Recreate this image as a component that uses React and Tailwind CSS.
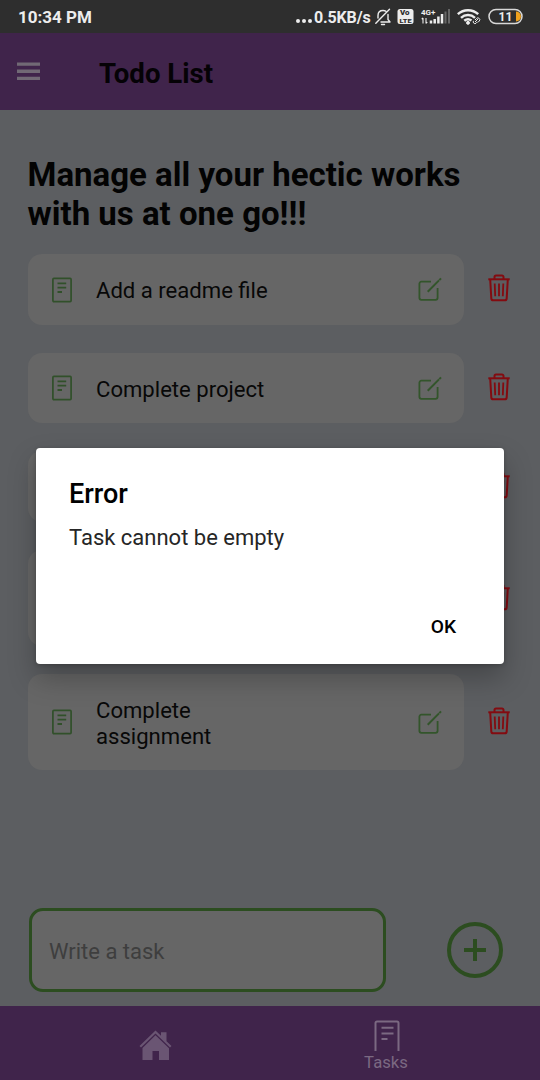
import React from "react";

function StatusBar() {
  return (
    <div className="flex h-[33px] shrink-0 items-center bg-[#2e2e2e] pl-[18px] pr-[17px] text-[#ededed]">
      <span className="mt-[2px] text-[17px] font-bold leading-none whitespace-nowrap">10:34 PM</span>
      <div className="ml-auto flex items-center">
        <svg width="18" height="16" viewBox="0 0 18 16" fill="#ededed">
          <circle cx="2" cy="12" r="2" />
          <circle cx="8" cy="12" r="2" />
          <circle cx="14" cy="12" r="2" />
        </svg>
        <span className="mt-[2px] w-[58px] text-[16px] font-bold leading-none tracking-[-0.150px] whitespace-nowrap">0.5KB/s</span>
        <svg className="ml-[2px]" width="18" height="18" viewBox="0 0 18 18" fill="none" stroke="#ededed" strokeWidth="1.400" strokeLinecap="round" strokeLinejoin="round">
          <path d="M7 14h9l-2-2.500V6.500M4 10V7.500c0-3 2-5 5-5 1 0 1.900.2 2.700.7M1.800 15.300 15.500 1.200M7.500 16.500h3" />
        </svg>
        <svg className="ml-[5px]" width="17" height="17" viewBox="0 0 17 17">
          <rect x="0.500" y="1" width="16" height="15" rx="2.500" fill="#ededed" />
          <text x="3" y="7.200" fontSize="6.300" textLength="9.500" lengthAdjust="spacingAndGlyphs" fontWeight="900" fill="#2e2e2e" className="font-[Roboto]">Vo</text>
          <text x="2.500" y="14.800" fontSize="6.200" textLength="12" lengthAdjust="spacingAndGlyphs" fontWeight="900" fill="#2e2e2e" className="font-[Roboto]">LTE</text>
        </svg>
        <svg className="ml-[7px]" width="29" height="17" viewBox="0 0 29 17">
          <text x="0" y="6.500" fontSize="8" fontWeight="700" fill="#ededed" className="font-[Roboto]">4G+</text>
          <path d="M2 15.500V10M.7 11.200 2 9.800M5 10v5.500M6.300 14 5 15.500" stroke="#ededed" strokeWidth="1.100" fill="none" />
          <path d="M10 15.500v-3M13.700 15.500v-4.500M17.400 15.500v-7M21 15.500V6" stroke="#ededed" strokeWidth="2.500" />
          <path d="M24.500 15.500V3.500M28 15.500V1" stroke="#666666" strokeWidth="2" />
        </svg>
        <svg className="ml-[7px]" width="24" height="18" viewBox="0 0 24 18" fill="none" stroke="#ededed">
          <path d="M.8 6.200a15 15 0 0 1 20.400 0M4 9.800a10.400 10.400 0 0 1 14 0M7.300 12.800a5.700 5.700 0 0 1 7.200-.3" strokeWidth="2.500" />
          <circle cx="11" cy="14.800" r="1.500" fill="#ededed" />
          <path d="m18 14 3-3M18 12l1.500-1.500a1.800 1.800 0 0 1 2.800 2.500L21 14.300M20.500 13.800 19 15.300a1.800 1.800 0 0 1-2.500-2.500" strokeWidth="1" />
        </svg>
        <svg className="ml-[7px]" width="35" height="17" viewBox="0 0 35 17">
          <rect x="1" y="1.500" width="33" height="14" rx="7" fill="none" stroke="#d8d8d8" strokeWidth="1.500" />
          <path d="M28 3.500a5 5 0 0 1 0 10z" fill="#f0a11d" />
          <text x="17.500" y="12.700" fontSize="12" textAnchor="middle" fontWeight="700" fill="#ededed" className="font-[Roboto]">11</text>
        </svg>
      </div>
    </div>
  );
}

function NoteIcon() {
  return (
    <svg className="mt-[1px] ml-6 shrink-0" width="20" height="26" viewBox="0 0 20 26" fill="none" stroke="#31502a" strokeWidth="1.700">
      <rect x="0.900" y="1.400" width="18.200" height="23.200" rx="1" />
      <path d="M5.500 6.400h8.700M5.500 10.700h8.700M5.500 15h4.500" strokeWidth="1.800" />
    </svg>
  );
}

function EditIcon() {
  return (
    <svg className="mr-[22.500px] ml-auto shrink-0" width="24" height="26" viewBox="0 0 24 26" fill="none" stroke="#33552b" strokeWidth="1.800">
      <path d="M13 5.700H3.400a2 2 0 0 0-2 2v14.100a2 2 0 0 0 2 2h14.200a2 2 0 0 0 2-2V12" />
      <path d="M9.700 15.700 21 4.400" strokeWidth="2" />
      <path d="m21.300 4.100 1.700-1.700" strokeWidth="2" />
    </svg>
  );
}

function TrashIcon() {
  return (
    <svg className="shrink-0" width="22" height="28" viewBox="0 0 22 28" fill="none" stroke="#830b10" strokeWidth="2">
      <path d="M.3 5.300h21.400" />
      <path d="M6.500 5.300V3a1.500 1.500 0 0 1 1.500-1.500h6A1.500 1.500 0 0 1 15.500 3v2.300" />
      <path d="m2.200 5.300 1.100 19.100a2 2 0 0 0 2 1.900h11.400a2 2 0 0 0 2-1.900l1.100-19.100" />
      <path d="m6.700 9.500.5 12.800M11 9.500v12.800M15.300 9.500l-.5 12.800" strokeWidth="1.800" />
    </svg>
  );
}

function Task({ label, tall }) {
  return (
    <div className="flex items-center pl-7">
      <div className={`flex w-[436px] items-center rounded-[14px] bg-[#666666] ${tall ? "h-[95.900px]" : "h-[70.600px]"}`}>
        <NoteIcon />
        <span className="mt-[2px] ml-6 w-[180px] text-[22.100px] leading-[26px] text-[#080808]">{label}</span>
        <EditIcon />
      </div>
      <div className="-mt-[2px] ml-[23.500px] flex">
        <TrashIcon />
      </div>
    </div>
  );
}

function Dialog() {
  return (
    <div className="absolute top-[448px] left-9 flex h-[216.400px] w-[468px] flex-col rounded-[4px] bg-white pl-[33px] pr-12 shadow-[0_14px_28px_rgba(0,0,0,0.26),0_1px_4px_rgba(0,0,0,0.2)]">
      <h2 className="mt-[30px] text-[27px] font-medium leading-8 text-black">Error</h2>
      <p className="mt-[14px] text-[22px] leading-7 text-[#262626]">Task cannot be empty</p>
      <button className="mt-auto mb-[25.300px] self-end text-[19.200px] font-medium leading-6 text-black">OK</button>
    </div>
  );
}

export default function App() {
  return (
    <div className="relative flex h-[1080px] w-[540px] flex-col overflow-hidden bg-[#5c5e61] font-[Roboto,sans-serif]">
      <StatusBar />
      <header className="flex h-[77px] shrink-0 items-center bg-[#40244b] pl-[17px]">
        <svg className="shrink-0" width="23" height="19" viewBox="0 0 23 19" fill="#716975">
          <path d="M0 .5h23v3.300H0zM0 7.600h23v3.300H0zM0 14.700h23V18H0z" />
        </svg>
        <h1 className="mt-[4px] ml-[59px] text-[27.600px] font-bold leading-8 text-[#050206]">Todo List</h1>
      </header>
      <main className="flex min-h-0 flex-1 flex-col">
        <h2 className="mt-[46px] ml-[27.500px] text-[33px] font-bold leading-[38.500px] whitespace-nowrap text-[#030303]">
          Manage all your hectic works<br />with us at one go!!!
        </h2>
        <div className="mt-[21px] flex flex-col gap-7">
          <Task label="Add a readme file" />
          <Task label="Complete project" />
          <Task />
          <Task tall />
          <Task tall label={<>Complete<br />assignment</>} />
        </div>
        <div className="mt-auto mb-[14px] flex items-center pl-[29px]">
          <div className="flex h-[84px] w-[357px] items-center rounded-[14px] border-3 border-[#2c4d20] bg-[#666666] pl-[17px] text-[22px] text-[#3e3e3e]">
            <span className="mt-[2px]">Write a task</span>
          </div>
          <svg className="ml-[61px]" width="56" height="56" viewBox="0 0 56 56" fill="none" stroke="#2c4d20" strokeWidth="4">
            <circle cx="28" cy="28" r="26" />
            <path d="M17 28h22M28 17v22" />
          </svg>
        </div>
      </main>
      <nav className="flex h-[74px] shrink-0 bg-[#40244b]">
        <div className="flex w-[310px] justify-center pt-6">
          <svg width="33" height="32" viewBox="0 0 33 32" fill="#6a5573">
            <path d="M16.500.5 22 5.800V2.200h5.500v9L32.500 16 31 17.600 16.500 3.600 2 17.600.5 16z" />
            <path d="M16.500 5.300 30 18.300V30H20V21H13.500v9H3.500V18z" />
          </svg>
        </div>
        <div className="flex w-[152px] flex-col items-center pt-[14px] text-[#7b6982]">
          <svg className="ml-[2px]" width="26" height="31" viewBox="0 0 26 31" fill="none" stroke="currentColor" strokeWidth="2">
            <path d="M1.500 31V3a1.500 1.500 0 0 1 1.500-1.500h20A1.500 1.500 0 0 1 24.500 3v28" />
            <path d="M7.500 7.800h12M7.500 13.500h12M7.500 19h6" />
          </svg>
          <span className="mt-[2px] text-[16.700px] leading-5">Tasks</span>
        </div>
      </nav>
      <Dialog />
    </div>
  );
}
